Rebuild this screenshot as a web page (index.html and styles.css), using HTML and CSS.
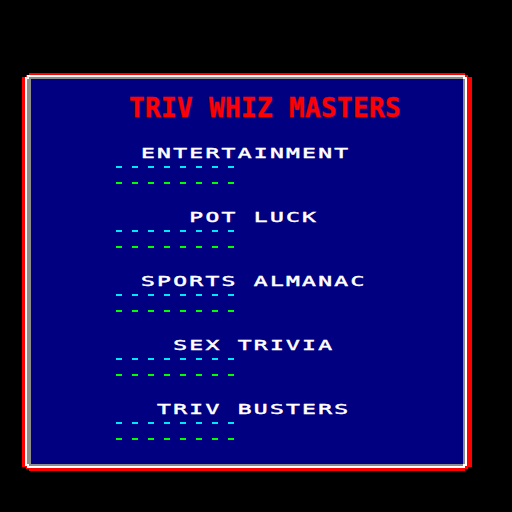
FILE: index.html
```html
<!DOCTYPE html>
<html lang="en">
<head>
<meta charset="utf-8">
<title>Triv Whiz Masters</title>
<link rel="stylesheet" href="styles.css">
</head>
<body>
<main class="screen">
  <div class="frame">
    <div class="frame-white">
      <div class="frame-gray">
        <section class="panel">
          <h1 class="title">TRIV WHIZ MASTERS</h1>
          <ul class="categories">
            <li class="category">
              <div class="label"><span>ENTERTAINMENT</span></div>
              <div class="slot slot-cyan"></div>
              <div class="slot slot-green"></div>
            </li>
            <li class="category">
              <div class="label"><span>   POT LUCK</span></div>
              <div class="slot slot-cyan"></div>
              <div class="slot slot-green"></div>
            </li>
            <li class="category">
              <div class="label"><span>SPORTS ALMANAC</span></div>
              <div class="slot slot-cyan"></div>
              <div class="slot slot-green"></div>
            </li>
            <li class="category">
              <div class="label"><span>  SEX TRIVIA</span></div>
              <div class="slot slot-cyan"></div>
              <div class="slot slot-green"></div>
            </li>
            <li class="category">
              <div class="label"><span> TRIV BUSTERS</span></div>
              <div class="slot slot-cyan"></div>
              <div class="slot slot-green"></div>
            </li>
          </ul>
        </section>
      </div>
    </div>
  </div>
</main>
</body>
</html>
```

FILE: styles.css
```css
html, body {
  margin: 0;
  padding: 0;
  background: #000;
}

.screen {
  width: 512px;
  height: 512px;
  overflow: hidden;
  padding: 73px 0 0 22px;
  box-sizing: border-box;
}

/* Layered frame: red, white, grey rims with stepped corners */
.frame {
  width: 450px;
  height: 398px;
  box-sizing: border-box;
  padding: 2px 5px 3px 3px;
  background: #ff0000;
  display: flex;
  clip-path: polygon(
    0 4px, 4px 4px, 4px 2px, 7px 2px, 7px 0,
    calc(100% - 7px) 0, calc(100% - 7px) 2px, calc(100% - 4px) 2px, calc(100% - 4px) 4px, 100% 4px,
    100% calc(100% - 4px), calc(100% - 4px) calc(100% - 4px), calc(100% - 4px) calc(100% - 2px), calc(100% - 7px) calc(100% - 2px), calc(100% - 7px) 100%,
    7px 100%, 7px calc(100% - 2px), 4px calc(100% - 2px), 4px calc(100% - 4px), 0 calc(100% - 4px)
  );
}

.frame-white {
  flex: 1;
  display: flex;
  padding: 2px;
  background: #ffffff;
  clip-path: polygon(
    0 2px, 2px 2px, 2px 0,
    calc(100% - 2px) 0, calc(100% - 2px) 2px, 100% 2px,
    100% calc(100% - 2px), calc(100% - 2px) calc(100% - 2px), calc(100% - 2px) 100%,
    2px 100%, 2px calc(100% - 2px), 0 calc(100% - 2px)
  );
}

.frame-gray {
  flex: 1;
  display: flex;
  padding: 2px 2px 2px 4px;
  background: #8c8c8c;
  clip-path: polygon(
    0 2px, 2px 2px, 2px 0,
    calc(100% - 2px) 0, calc(100% - 2px) 2px, 100% 2px,
    100% calc(100% - 2px), calc(100% - 2px) calc(100% - 2px), calc(100% - 2px) 100%,
    2px 100%, 2px calc(100% - 2px), 0 calc(100% - 2px)
  );
}

.panel {
  flex: 1;
  background: #000080;
  padding-top: 16px;
}

.title {
  margin: 0 0 0 98px;
  height: 26px;
  font: bold 26px/26px "DejaVu Sans Mono", monospace;
  letter-spacing: 0.35px;
  color: #ff0000;
  white-space: pre;
  -webkit-text-stroke: 0.4px #ff0000;
}

.categories {
  list-style: none;
  margin: 27px 0 0;
  padding: 0;
}

.category {
  height: 64px;
}

.label {
  display: flex;
  align-items: flex-start;
  height: 10px;
  margin-left: 110px;
}

.label span {
  font: 13.5px/10px "DejaVu Sans Mono", monospace;
  letter-spacing: 1.35px;
  color: #ffffff;
  white-space: pre;
  -webkit-text-stroke: 0.45px #ffffff;
  transform: scaleX(1.7);
  transform-origin: 0 0;
}

/* Blank name slots: eight dashes on a 16px pitch */
.slot {
  width: 118px;
  height: 2px;
  margin-left: 85px;
}

.slot-cyan {
  margin-top: 8px;
  background: repeating-linear-gradient(to right, #00e8ff 0 6px, transparent 6px 16px);
}

.slot-green {
  margin-top: 14px;
  background: repeating-linear-gradient(to right, #00ff00 0 6px, transparent 6px 16px);
}
```
